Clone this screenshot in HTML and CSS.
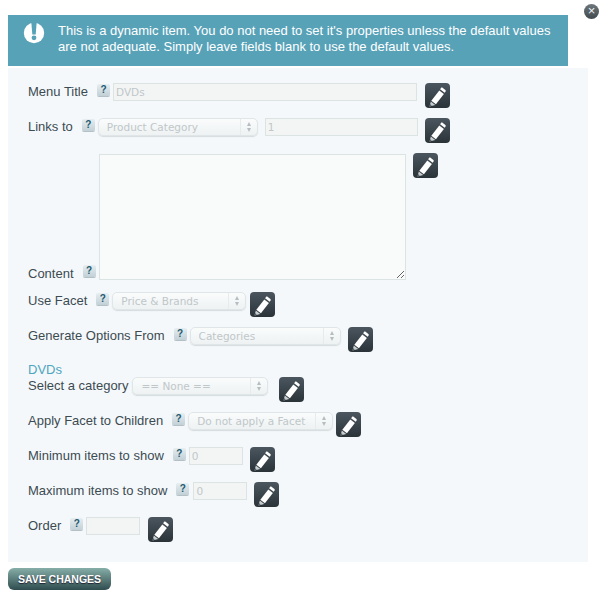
FILE: index.html
```html
<!DOCTYPE html>
<html lang="en">
<head>
    <meta charset="UTF-8">
    <title>Edit menu item</title>
    <link rel="stylesheet" href="styles.css">
</head>
<body>
<svg class="defs" width="0" height="0">
    <symbol id="pencil" viewBox="0 0 25 25">
        <path d="M17.2 4.600l3.200 2.500c.5.4.5 1 .2 1.500l-.9 1.200-4.600-3.600.9-1.300c.3-.5.8-.6 1.200-.3z" fill="#fff"/>
        <path d="M14.300 7.500l4.600 3.600-8 10.200-4.600-3.600z" fill="#fff"/>
        <path d="M5.800 18.400l4.500 3.500-5.800 1.700z" fill="#c9ced0"/>
        <path d="M5.300 21.200l1.500 1.200-2.300.7z" fill="#3a444b"/>
    </symbol>
</svg>

<a class="close" href="#">&#215;</a>

<div class="notice">
    <svg class="notice-icon" width="22" height="22" viewBox="0 0 22 22">
        <circle cx="11" cy="11" r="10.200" fill="#fff"/>
        <path d="M8.300 0h5.400l-1 12.500h-3.400z" fill="#58a2b8"/>
        <circle cx="11" cy="15.800" r="2.400" fill="#58a2b8"/>
    </svg>
    <p>This is a dynamic item. You do not need to set it's properties unless the default values are not adequate. Simply leave fields blank to use the default values.</p>
</div>

<form class="panel">
    <div class="row">
        <label>Menu Title</label>
        <span class="help">?</span>
        <input class="w-title" type="text" value="DVDs" disabled>
        <a class="edit edit-wide" href="#"><svg width="25" height="25"><use href="#pencil"/></svg></a>
    </div>
    <div class="row">
        <label>Links to</label>
        <span class="help">?</span>
        <div class="sel w-links"><select disabled><option>Product Category</option></select><span class="arrows"></span></div>
        <input class="w-links-id" type="text" value="1" disabled>
        <a class="edit" href="#"><svg width="25" height="25"><use href="#pencil"/></svg></a>
    </div>
    <div class="row row-tall">
        <label>Content</label>
        <span class="help">?</span>
        <textarea disabled></textarea>
        <a class="edit" href="#"><svg width="25" height="25"><use href="#pencil"/></svg></a>
    </div>
    <div class="row">
        <label>Use Facet</label>
        <span class="help">?</span>
        <div class="sel w-facet"><select disabled><option>Price &amp; Brands</option></select><span class="arrows"></span></div>
        <a class="edit edit-near" href="#"><svg width="25" height="25"><use href="#pencil"/></svg></a>
    </div>
    <div class="row">
        <label>Generate Options From</label>
        <span class="help">?</span>
        <div class="sel w-options"><select disabled><option>Categories</option></select><span class="arrows"></span></div>
        <a class="edit" href="#"><svg width="25" height="25"><use href="#pencil"/></svg></a>
    </div>
    <h4>DVDs</h4>
    <div class="row">
        <label class="no-help">Select a category</label>
        <div class="sel w-category"><select disabled><option>== None ==</option></select><span class="arrows"></span></div>
        <a class="edit edit-far" href="#"><svg width="25" height="25"><use href="#pencil"/></svg></a>
    </div>
    <div class="row">
        <label>Apply Facet to Children</label>
        <span class="help">?</span>
        <div class="sel w-children"><select disabled><option>Do not apply a Facet</option></select><span class="arrows"></span></div>
        <a class="edit edit-close" href="#"><svg width="25" height="25"><use href="#pencil"/></svg></a>
    </div>
    <div class="row">
        <label>Minimum items to show</label>
        <span class="help">?</span>
        <input class="w-small" type="text" value="0" disabled>
        <a class="edit" href="#"><svg width="25" height="25"><use href="#pencil"/></svg></a>
    </div>
    <div class="row">
        <label>Maximum items to show</label>
        <span class="help help-wide">?</span>
        <input class="w-small" type="text" value="0" disabled>
        <a class="edit" href="#"><svg width="25" height="25"><use href="#pencil"/></svg></a>
    </div>
    <div class="row">
        <label>Order</label>
        <span class="help">?</span>
        <input class="w-small" type="text" disabled>
        <a class="edit edit-wide" href="#"><svg width="25" height="25"><use href="#pencil"/></svg></a>
    </div>
</form>

<a class="save" href="#">SAVE CHANGES</a>
</body>
</html>
```

FILE: styles.css
```css
html, body, p, h4 {
    margin: 0;
    padding: 0;
}

body {
    position: relative;
    background: #fff;
    font-family: "Liberation Sans", Arial, sans-serif;
    font-size: 13px;
    color: #3c4b52;
}

.defs {
    position: absolute;
}

.close {
    position: absolute;
    left: 584px;
    top: 4px;
    width: 15px;
    height: 15px;
    border-radius: 50%;
    background: linear-gradient(#6d777c, #3f494e);
    color: #eef2f3;
    font: 13px/14px "Liberation Sans", sans-serif;
    text-align: center;
    text-decoration: none;
}

.notice {
    display: flex;
    align-items: flex-start;
    width: 560px;
    height: 51px;
    margin: 15px 0 2px 8px;
    background: #58a2b8;
    color: #fff;
    box-sizing: border-box;
    padding: 8px 10px 0 15px;
}

.notice-icon {
    flex: none;
    margin-right: 13px;
    margin-top: -1px;
}

.notice p {
    font-size: 13px;
    line-height: 16px;
}

.panel {
    width: 580px;
    height: 494px;
    margin-left: 8px;
    padding: 15px 0 0 20px;
    box-sizing: border-box;
    background: #f5f8fa;
}

.row {
    display: flex;
    align-items: flex-start;
    margin-bottom: 10px;
}

.row-tall {
    margin-bottom: 12px;
    height: 127px;
}

.row label {
    margin: 1px 9px 0 0;
    line-height: 16px;
}

.row label.no-help {
    margin-right: 4px;
}

.row-tall label {
    align-self: flex-end;
    margin-bottom: -2px;
}

.help {
    flex: none;
    width: 13px;
    height: 12px;
    margin: 1px 3px 0 0;
    border-radius: 2px;
    background: linear-gradient(#e6eef1, #c2d0d6);
    box-shadow: 0 1px 0 #b3c1c7;
    color: #1f5a70;
    font: bold 10px/12px "Liberation Sans", sans-serif;
    text-align: center;
}

.help-wide {
    margin-right: 4px;
}

.row-tall .help {
    align-self: flex-end;
    margin-bottom: 3px;
}

input, select, textarea {
    font-family: "DejaVu Sans", Verdana, sans-serif;
    font-size: 10.500px;
    color: #bfc7c9;
    box-sizing: border-box;
}

input {
    height: 18px;
    padding: 0 2px;
    border: 1px solid #dbe4e2;
    background: #f3f5f5;
    border-radius: 0;
}

input:disabled {
    color: #bfc7c9;
    -webkit-text-fill-color: #bfc7c9;
}

textarea {
    width: 307px;
    height: 126px;
    margin-top: 1px;
    border: 1px solid #dbe4e2;
    background: #f9fbfb;
    border-radius: 0;
    resize: both;
}

.w-title {
    width: 304px;
}

.w-links-id {
    width: 153px;
    margin-left: 7px;
}

.w-small {
    width: 54px;
}

.sel {
    position: relative;
    height: 18px;
    flex: none;
}

.sel select {
    appearance: none;
    width: 100%;
    height: 18px;
    padding: 0 0 0 8px;
    border: 1px solid #e0e6e8;
    border-radius: 5px;
    background: linear-gradient(#fafcfc, #eef2f3);
    box-shadow: 0 1px 1px #d5dcde;
    opacity: 1;
    line-height: 16px;
}

.arrows {
    position: absolute;
    right: 0;
    top: 1px;
    width: 17px;
    height: 16px;
    border-left: 1px solid #e6ebec;
}

.arrows::before, .arrows::after {
    content: "";
    position: absolute;
    left: 6px;
    border-left: 2.500px solid transparent;
    border-right: 2.500px solid transparent;
}

.arrows::before {
    top: 3px;
    border-bottom: 4px solid #b5bdc0;
}

.arrows::after {
    top: 9px;
    border-top: 4px solid #b5bdc0;
}

.w-links {
    width: 160px;
}

.w-facet {
    width: 134px;
}

.w-options {
    width: 151px;
}

.w-category {
    width: 136px;
}

.w-children {
    width: 145px;
}

.edit {
    flex: none;
    display: block;
    width: 25px;
    height: 25px;
    margin-left: 7px;
    border-radius: 4px;
    background: linear-gradient(#4b565f, #2a3338);
}

.edit svg {
    display: block;
}

.edit-wide {
    margin-left: 8px;
}

.edit-near {
    margin-left: 4px;
}

.edit-close {
    margin-left: 3px;
}

.edit-far {
    margin-left: 11px;
}

h4 {
    height: 15px;
    font-size: 13px;
    font-weight: normal;
    line-height: 15px;
    color: #4fa5c0;
}

.save {
    display: block;
    width: 103px;
    height: 22px;
    margin: 6px 0 0 8px;
    border-radius: 6px;
    background: linear-gradient(#86aea8, #2f4c4e);
    color: #fff;
    font-size: 10.500px;
    font-weight: bold;
    line-height: 22px;
    text-align: center;
    text-decoration: none;
    text-shadow: 0 1px 1px #223;
}
```
